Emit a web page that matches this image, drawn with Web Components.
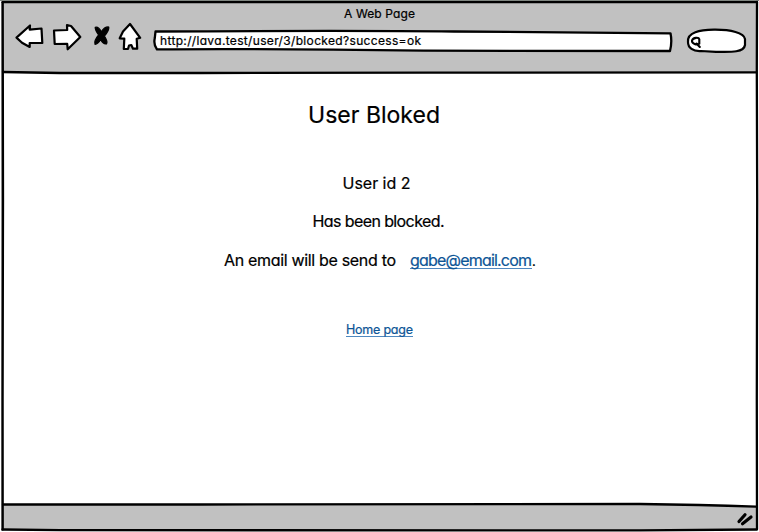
<!DOCTYPE html>
<html lang="en"><head><meta charset="utf-8"><title>A Web Page</title>
<style>html,body{margin:0;width:759px;height:532px;overflow:hidden;background:#fff}</style></head>
<body>
<sketch-browser>
  <fit-text slot="title" size="12" width="71">A Web Page</fit-text>
  <sketch-toolbar slot="toolbar"><fit-text size="12" width="261">http://lava.test/user/3/blocked?success=ok</fit-text></sketch-toolbar>
  <blocked-message>
    <fit-text slot="heading" size="23" width="132">User Bloked</fit-text>
    <fit-text slot="id" size="16" width="68">User id 2</fit-text>
    <fit-text slot="status" size="16" width="132">Has been blocked.</fit-text>
    <fit-text slot="mail" size="16" width="172">An email will be send to</fit-text>
    <sketch-link slot="mail"><fit-text size="16" width="122">gabe@email.com</fit-text></sketch-link>
    <fit-text slot="mail" size="13" width="2">.</fit-text>
    <sketch-link slot="home"><fit-text size="12.5" width="67">Home page</fit-text></sketch-link>
  </blocked-message>
</sketch-browser>
<script>
const define = (name, html, ready) => {
  const t = document.createElement('template');
  t.innerHTML = html;
  customElements.define(name, class extends HTMLElement {
    constructor() { super(); this.attachShadow({mode:'open'}).append(t.content.cloneNode(true)); }
    connectedCallback() { if (ready) ready(this); }
  });
};

define('sketch-browser', `
<style>
:host{position:relative;display:flex;flex-direction:column;width:759px;height:532px;color:#000;font-family:Inter,"Open Sans",sans-serif}
.frame{position:absolute;inset:0;z-index:0}
header,main{position:relative;z-index:1}
header{height:73px;display:flex;flex-direction:column}
.title{height:23px;padding-top:7px;box-sizing:border-box;display:flex;justify-content:center}
main{flex:1}
</style>
<svg class="frame" width="759" height="532" viewBox="0 0 759 532">
<path d="M2 1H757V73H2Z" fill="#c1c1c1"/>
<path d="M3 504L640 504Q700 505 757 507V530H3Z" fill="#c1c1c1"/>
<path d="M0 .5H759" stroke="#7f8580"/>
<path d="M1.5 2V531" stroke="#aaa" stroke-width="1"/>
<g fill="none" stroke="#000" stroke-width="2.3" stroke-linecap="round">
<path d="M2.7 2.2L3 200L2.6 400L2.7 529.5"/>
<path d="M2.5 2.2H757"/>
<path d="M757 2L756.8 70L757.2 200L756.8 400L757 529"/>
<path d="M3 72L60 73L200 73L430 72.6L756 72.4"/>
<path d="M3 504.5H200L640 504Q700 504.6 756 506.7"/>
<path d="M2.5 529.5L60 530.2L640 530.3L757 529.5"/>
</g>
<g stroke="#000" stroke-width="3.2" stroke-linecap="round"><path d="M739 521.5L745 514.8M742.5 523.7L751 517"/></g>
</svg>
<header><div class="title"><slot name="title"></slot></div><slot name="toolbar"></slot></header>
<main><slot></slot></main>`);

define('sketch-toolbar', `
<style>
:host{display:flex;align-items:flex-start;height:32px;padding-left:14px}
svg{display:block;flex:none;overflow:visible;fill:#fff;stroke:#000;stroke-width:2.2;stroke-linejoin:round;stroke-linecap:round}
.field{display:grid;width:520px;margin:6px 0 0 6px;height:24px}
.field>*{grid-area:1/1}
.field div{padding:5px 0 0 6px;position:relative}
.search{margin-left:12px}
</style>
<svg width="38" height="32"><path d="M2.5 14.6L16 2.5L15.7 6.6L27.5 5.5L28.3 20H15.7V24L8 19.7Z"/></svg>
<svg width="38" height="32"><path d="M2 7.5L15.2 7L15 2.2L19 3L28.3 14L15.7 26.3L15.2 20.8L2.7 21Z"/></svg>
<svg width="26" height="32"><path d="M5.2 4.3Q8.5 3.3 11.3 8.8Q14.5 3.6 18.8 4Q19.3 7.5 14.4 13Q18 18.4 16.5 20.9Q13 21.5 10.7 16.5Q7.8 21.4 5 21.3Q3.6 18 8.6 12Q5 7 5.2 4.3Z" fill="#000" stroke-width="1.2"/></svg>
<svg width="32" height="32"><path d="M14 1L24.2 14.8L20.7 15.7L21.2 25.7H17L15.3 22L13 22.5L12 26H7.8L8.3 15.7L3.7 15.3L7 8.5Z"/></svg>
<div class="field"><svg width="520" height="24"><path d="M1.5 2.5Q200 1.3 300 2.5T516.5 4.3Q518.3 13 516 22Q380 21.5 270 21.7Q100 19.4 3 20.4Q-.7 16 .8 9Z" stroke-width="2.3"/></svg><div><slot></slot></div></div>
<svg class="search" width="64" height="32"><path d="M2 19C1 9 14 7 28 6.7C45 6.5 58 10 59 16V22C58 30 43 29 30 28.8L15 28C7 28.5 2 25 2 19Z" stroke-width="2.2"/><path d="M6 17.5C7.2 14.3 12.8 14 13.3 16.3V20.7C11 22.4 5.5 20.8 6 17.5M10.5 20.5L13.8 24" fill="none" stroke-width="2.1"/></svg>`);

define('blocked-message', `
<style>
:host{display:flex;flex-direction:column;align-items:center;width:759px}
.heading{margin:29px 11px 0 0;height:28px}
.id{margin:44px 6px 0 0;height:20px}
.status{margin:18px 2px 0 0;height:20px}
.mail{margin:19px 1px 0 0;height:20px;display:flex;align-items:baseline}
.mail ::slotted(sketch-link){margin-left:14px}
.home{margin:52px 0 0;height:17px}
</style>
<div class="heading"><slot name="heading"></slot></div>
<div class="id"><slot name="id"></slot></div>
<div class="status"><slot name="status"></slot></div>
<div class="mail"><slot name="mail"></slot></div>
<div class="home"><slot name="home"></slot></div>`);

define('sketch-link', `
<style>:host{display:block}a{display:block;color:#0d5596;box-shadow:inset 0 -1px #4f88bf}</style>
<a><slot></slot></a>`);

/* Spreads its letters so that the line takes exactly the given width. */
define('fit-text', `
<style>:host{display:block;white-space:nowrap}span{display:block;width:max-content;font-feature-settings:"cv11" 1,"calt" 0;line-height:1.15;-webkit-text-stroke:.22px currentColor}</style>
<span><slot></slot></span>`, el => {
  const span = el.shadowRoot.querySelector('span'), n = el.textContent.length, w = +el.getAttribute('width');
  el.style.fontSize = el.getAttribute('size') + 'px';
  if (n > 1) {
    const s = (w - span.getBoundingClientRect().width) / (n - 1);
    span.style.letterSpacing = s + 'px';
  }
  el.style.width = w + 'px';
});
</script>
</body></html>
